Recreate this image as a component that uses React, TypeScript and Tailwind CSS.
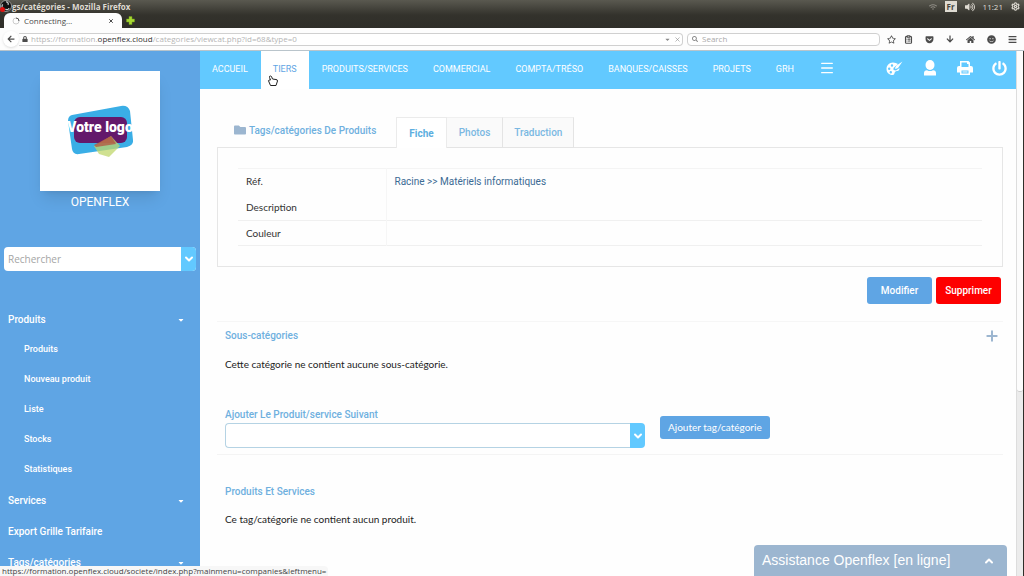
import type { ReactNode } from "react";
import {
  FaArrowDown,
  FaArrowLeft,
  FaBars,
  FaCaretDown,
  FaFolder,
  FaGetPocket,
  FaHome,
  FaLock,
  FaPowerOff,
  FaRegStar,
  FaSearch,
  FaSmile,
  FaVolumeUp,
  FaWifi,
} from "react-icons/fa";
import { ChevronDown, ChevronUp, ClipboardList, Menu, Plus, Settings, X } from "lucide-react";

const navItems = ["ACCUEIL", "TIERS", "PRODUITS/SERVICES", "COMMERCIAL", "COMPTA/TRÉSO", "BANQUES/CAISSES", "PROJETS", "GRH"];

const menu = [
  { label: "Produits", caret: true, children: ["Produits", "Nouveau produit", "Liste", "Stocks", "Statistiques"] },
  { label: "Services", caret: true, children: [] },
  { label: "Export Grille Tarifaire", caret: false, children: [] },
  { label: "Tags/catégories", caret: true, children: [] },
];

function TitleBar() {
  return (
    <div className="flex h-[13px] items-center justify-between text-[8px] text-[#dfdbd2]">
      <div className="flex items-center font-bold">
        <svg className="h-[13px] w-3" viewBox="0 0 12 13">
          <circle cx="6" cy="6" r="5.5" fill="#111" stroke="#d8d8d8" strokeWidth="0.6" />
          <path d="M6 2a2 2 0 0 1 2 3M3 8a2 2 0 0 1 0-3.500M9 8a2 2 0 0 1-3.500 1" fill="none" stroke="#ccc" strokeWidth="1.200" />
          <circle cx="2.500" cy="9.500" r="2.500" fill="#e01010" />
        </svg>
        <span>gs/catégories - Mozilla Firefox</span>
      </div>
      <div className="flex items-center gap-2 pr-1">
        <FaWifi className="size-2 text-[#8d8b83]" />
        <span className="bg-[#dfdbd2] px-0.5 leading-[11px] font-bold text-[#45443e]">Fr</span>
        <FaVolumeUp className="size-[10px]" />
        <span>11:21</span>
        <Settings className="size-[9px]" strokeWidth={3} />
      </div>
    </div>
  );
}

function TabStrip() {
  return (
    <div className="flex h-[15px] items-end">
      <div className="ml-1 flex h-[15px] w-[118px] items-center gap-1 rounded-t-md bg-[#fdfdfd] px-2 text-[8px] text-[#4c4c4c]">
        <svg className="size-2" viewBox="0 0 8 8">
          <circle cx="4" cy="4" r="3" fill="none" stroke="#ccc" />
          <path d="M4 1a3 3 0 0 1 3 3" fill="none" stroke="#555" />
        </svg>
        <span className="flex-1">Connecting…</span>
        <button aria-label="Fermer l'onglet">
          <X className="size-[6px]" strokeWidth={4} />
        </button>
      </div>
      <button className="ml-1 self-center" aria-label="Nouvel onglet">
        <svg className="size-[9px]" viewBox="0 0 9 9">
          <path d="M3 0.500h3v2.500h2.500v3H6v2.500H3V6H0.500V3H3z" fill="#a6d732" stroke="#6f9a1a" strokeWidth="0.500" />
        </svg>
      </button>
    </div>
  );
}

function AddressBar() {
  return (
    <div className="flex h-[23px] items-center border-b border-[#b9c4cb] bg-[#fdfdfd] text-[8px] text-[#4c4c4c]">
      <button className="z-10 ml-[3px] flex size-4 shrink-0 items-center justify-center rounded-full bg-white shadow" aria-label="Précédent">
        <FaArrowLeft className="size-2" />
      </button>
      <div className="flex h-[13px] flex-1 items-center gap-[3px] rounded-r-sm border border-l-0 border-[#d0d0d0] bg-white pr-px pl-[3px]">
        <FaLock className="size-[6px]" />
        <div className="flex-1 text-[#b5b5b5]">
          https://formation.<span className="text-[#333]">openflex.cloud</span>/categories/viewcat.php?id=68&amp;type=0
        </div>
        <FaCaretDown className="size-[7px] text-[#888]" />
        <X className="size-[7px] text-[#888]" />
      </div>
      <label className="ml-1 flex h-[13px] w-[193px] items-center gap-1 rounded-sm border border-[#d0d0d0] bg-white px-1">
        <FaSearch className="size-[6px] text-[#888]" />
        <input className="min-w-0 flex-1 outline-none placeholder:text-[#aaa]" placeholder="Search" aria-label="Search" />
      </label>
      <div className="flex items-center gap-3 px-[7px] text-[#4c4c4c]">
        <FaRegStar className="size-[9px]" />
        <ClipboardList className="-ml-1 size-[9px]" strokeWidth={3} />
        <FaGetPocket className="size-[9px]" />
        <FaArrowDown className="size-[8px]" />
        <FaHome className="size-[9px]" />
        <FaSmile className="size-[9px]" />
        <FaBars className="size-[9px]" />
      </div>
    </div>
  );
}

function Logo() {
  return (
    <div className="flex size-[120px] items-center justify-center bg-white shadow-lg">
      <svg className="h-[54px] w-[70px]" viewBox="0 0 70 54">
        <path d="M7 11Q3 12 3 17L7 45Q8 51 14 50L62 43Q69 41 68 36L65 7Q63 1 56 2Z" fill="#3aaee6" />
        <rect x="9" y="13" width="53" height="26" rx="6" fill="#64196b" />
        <path d="M29 42L46 32L55 42L44 53L34 50Z" fill="#c0d76c" fillOpacity="0.75" />
        <path d="M29 41L46 32L51 40L31 43Z" fill="#b4513d" fillOpacity="0.75" />
        <text x="35" y="28" textAnchor="middle" fontFamily="Roboto, sans-serif" fontWeight="900" fontSize="14" fill="#fff">
          Votre logo
        </text>
      </svg>
    </div>
  );
}

function Sidebar() {
  return (
    <aside className="flex w-[200px] shrink-0 flex-col bg-[#5fa5e4] font-[Roboto,sans-serif] text-white">
      <div className="flex flex-col items-center pt-5">
        <Logo />
        <span className="mt-[3px] text-[12px] leading-4">OPENFLEX</span>
      </div>
      <div className="mx-1 mt-[37px] flex h-6 shrink-0 overflow-hidden rounded-sm bg-white">
        <input
          className="min-w-0 flex-1 px-1 font-[Open_Sans,sans-serif] text-[10px] text-gray-600 outline-none placeholder:text-[#a5a5a5]"
          placeholder="Rechercher"
          aria-label="Rechercher"
        />
        <button className="flex w-[15px] items-center justify-center bg-[#62c9ff]" aria-label="Ouvrir la recherche">
          <ChevronDown className="size-3" strokeWidth={4} />
        </button>
      </div>
      <nav className="mt-[33px] text-[10px] font-medium">
        {menu.map((item) => (
          <div key={item.label}>
            <a href="#" className="flex h-[31px] items-center justify-between pr-[15px] pl-2">
              {item.label}
              {item.caret && <FaCaretDown className="size-2" />}
            </a>
            {item.children.map((child) => (
              <a key={child} href="#" className="flex h-[30px] items-center pl-6 text-[9px]">
                {child}
              </a>
            ))}
          </div>
        ))}
      </nav>
    </aside>
  );
}

function TopNav() {
  return (
    <header className="flex h-[38px] shrink-0 items-stretch justify-between bg-[#62c9ff] font-[Roboto,sans-serif] text-white">
      <nav className="flex gap-px text-[9px]">
        {navItems.map((item) => (
          <a
            key={item}
            href="#"
            className={
              item === "TIERS"
                ? "relative flex items-center bg-white px-3 text-[#5fa5e4]"
                : "flex items-center px-3"
            }
          >
            {item}
            {item === "TIERS" && (
              <svg className="absolute top-6 left-1.5 h-3 w-3" viewBox="0 0 12 12">
                <path
                  d="M3.500 1Q2 1 2.500 2.500L3.500 5L2 5Q1 5.500 2 7L3.500 10.500H9L10.500 6Q10.500 4.500 9 4.500L5.500 4L4.500 1.500Z"
                  fill="#fff"
                  stroke="#222"
                />
              </svg>
            )}
          </a>
        ))}
        <button className="px-3 pb-1" aria-label="Menu">
          <Menu className="size-4" />
        </button>
      </nav>
      <div className="flex items-center gap-[19px] pr-[9px] pb-1">
        <svg className="size-[17px]" viewBox="0 0 17 17" fill="currentColor" aria-label="Thème">
          <path
            fillRule="evenodd"
            d="M7 2.500C3 2.500 0.500 5.500 0.500 9S3 15 6.500 15C9 15 8 12.500 9.500 11.500S13.500 11.500 13.500 8L10 10.500L7.500 10L7.500 8L12 4Q10 2.500 7 2.500ZM6 4.300a1.200 1.200 0 1 1 0 2.400a1.200 1.200 0 0 1 0-2.400ZM3.200 7.500a1.200 1.200 0 1 1 0 2.400a1.200 1.200 0 0 1 0-2.400ZM4.800 11a1.200 1.200 0 1 1 0 2.400a1.200 1.200 0 0 1 0-2.400Z"
          />
          <path d="M16.500 1.500L10.500 5.500L9 8L9.500 9L12 8Z" />
        </svg>
        <svg className="size-4" viewBox="0 0 16 16" fill="currentColor" aria-label="Utilisateur">
          <ellipse cx="8" cy="5" rx="4.500" ry="5" />
          <path d="M2 15.500V13Q2 10.500 5 10.200Q8 12 11 10.200Q14 10.500 14 13V15.500Z" />
        </svg>
        <svg className="size-4" viewBox="0 0 16 16" fill="currentColor" aria-label="Imprimer">
          <path
            fillRule="evenodd"
            d="M3 1H11.500L13 2.500V6H14Q16 6 16 8V12.500H13V15H3V12.500H0V8Q0 6 2 6H3ZM4.500 2.500V7H11.500V4H10V2.500ZM4.500 10.500V13.500H11.500V10.500Z"
          />
          <path d="M5.500 11.200H10.500V12.700H5.500Z" opacity="0.6" />
        </svg>
        <FaPowerOff className="size-[15px]" />
      </div>
    </header>
  );
}

function CategoryCard() {
  return (
    <section className="mt-7 mr-[13px] ml-[17px]">
      <div className="flex items-end">
        <a href="#" className="flex items-center gap-[3px] self-center pr-5 pb-1 pl-[17px] font-[Roboto,sans-serif] text-[10px] font-medium text-[#6fb0de]">
          <FaFolder className="size-3 text-[#9cb6d0]" />
          Tags/catégories De Produits
        </a>
        <div className="z-10 -mb-px flex h-[31px] items-stretch font-[Roboto,sans-serif] text-[10px] text-[#7ab8e2]">
          <a href="#" className="flex items-center border border-b-0 border-[#ebebeb] bg-white px-3 font-bold text-[#5caee0]">Fiche</a>
          <a href="#" className="flex items-center border-t border-b border-[#e4e4e4] border-t-[#f0f0f0] bg-[#fafafa] px-3 font-medium">Photos</a>
          <a href="#" className="flex items-center border border-[#e4e4e4] border-t-[#f0f0f0] bg-[#fafafa] px-[11px] font-medium">Traduction</a>
        </div>
      </div>
      <div className="border border-[#e6e6e6] px-5 py-5">
        <table className="w-full text-left text-[10px] text-[#333]">
          <tbody>
            <tr className="h-[26px] border-t border-[#f4f4f4]">
              <th className="w-[148px] border-r border-[#f6f6f6] pl-2 font-normal">Réf.</th>
              <td className="pl-2 font-[Roboto,sans-serif] text-[#3c6b94]">
                <a href="#">Racine</a> &gt;&gt; <a href="#">Matériels informatiques</a>
              </td>
            </tr>
            <tr className="h-[26px]">
              <th className="border-r border-[#f6f6f6] pl-2 font-normal">Description</th>
              <td />
            </tr>
            <tr className="h-[25px] border-y border-[#f0f0f0]">
              <th className="border-r border-[#f6f6f6] pl-2 font-normal">Couleur</th>
              <td />
            </tr>
          </tbody>
        </table>
      </div>
    </section>
  );
}

function SectionTitle({ children }: { children: ReactNode }) {
  return <h2 className="font-[Roboto,sans-serif] text-[10px] leading-4 font-medium text-[#6fb0de]">{children}</h2>;
}

function Content() {
  return (
    <main className="flex-1 bg-[#fefefe] font-[Lato,sans-serif] text-[10px] text-[#222]">
      <CategoryCard />
      <div className="mt-[10px] flex justify-end gap-1 pr-[15px] font-[Roboto,sans-serif] font-medium text-white">
        <button className="h-[27px] w-[65px] rounded-[3px] bg-[#5fa5e4]">Modifier</button>
        <button className="h-[27px] w-[65px] rounded-[3px] bg-[#fe0000]">Supprimer</button>
      </div>

      <section className="mt-[17px] mr-[13px] ml-[17px] border-t border-[#f6f6f6] pr-[3px] pl-2">
        <div className="flex items-center justify-between pt-1.5">
          <SectionTitle>Sous-catégories</SectionTitle>
          <button className="text-[#9cb6d0]" aria-label="Ajouter une sous-catégorie">
            <Plus className="size-4" strokeWidth={3} />
          </button>
        </div>
        <p className="mt-3 leading-4">Cette catégorie ne contient aucune sous-catégorie.</p>
      </section>

      <form className="mt-[35px] mr-[13px] ml-[17px] flex items-start gap-[15px] border-b border-[#f4f4f4] px-2 pb-1.5">
        <div className="w-6/11 min-w-0">
          <label htmlFor="product" className="block font-[Roboto,sans-serif] leading-4 font-medium text-[#6fb0de]">
            Ajouter Le Produit/service Suivant
          </label>
          <div className="flex h-[25px]">
            <select
              id="product"
              className="min-w-0 flex-1 appearance-none rounded-l-sm border border-r-0 border-solid border-[#b5d3e4] bg-white px-1 outline-none"
            >
              <option />
            </select>
            <span className="flex w-[15px] items-center justify-center rounded-r-sm bg-[#62c9ff] text-white">
              <ChevronDown className="size-3" strokeWidth={4} />
            </span>
          </div>
        </div>
        <button type="button" className="mt-[9px] h-[23px] rounded-[3px] bg-[#5fa5e4] px-2 text-white">Ajouter tag/catégorie</button>
      </form>

      <section className="mx-[25px] mt-[29px]">
        <SectionTitle>Produits Et Services</SectionTitle>
        <p className="mt-[11px] leading-4">Ce tag/catégorie ne contient aucun produit.</p>
      </section>
    </main>
  );
}

export default function App() {
  return (
    <div className="flex h-screen flex-col overflow-hidden bg-[#2f2e29] bg-[linear-gradient(#5a5950,#33322c_15px,#2f2e29_28px)] font-[Open_Sans,sans-serif]">
      <TitleBar />
      <TabStrip />
      <AddressBar />
      <div className="relative mr-px flex min-h-0 flex-1 overflow-hidden">
        <Sidebar />
        <div className="flex min-w-0 flex-1 flex-col">
          <TopNav />
          <Content />
        </div>
        <div className="w-[7px] shrink-0 border-l border-[#ddd] bg-[#ececec]">
          <div className="h-[65%] rounded-b-sm border-b border-[#ccc] bg-[#fcfcfc]" />
        </div>
        <button className="absolute right-4 bottom-0 flex h-[31px] w-[253px] items-center justify-between rounded-t bg-[#9cb6d0] pr-3 pl-2 font-[Liberation_Sans,sans-serif] text-[14px] text-white">
          Assistance Openflex [en ligne]
          <ChevronUp className="size-3" strokeWidth={4} />
        </button>
        <div className="absolute bottom-0 left-0 rounded-tr-sm bg-[#f7f7f7] px-0.5 text-[8px] leading-[10px] text-[#444]">
          https://formation.openflex.cloud/societe/index.php?mainmenu=companies&amp;leftmenu=
        </div>
      </div>
    </div>
  );
}
